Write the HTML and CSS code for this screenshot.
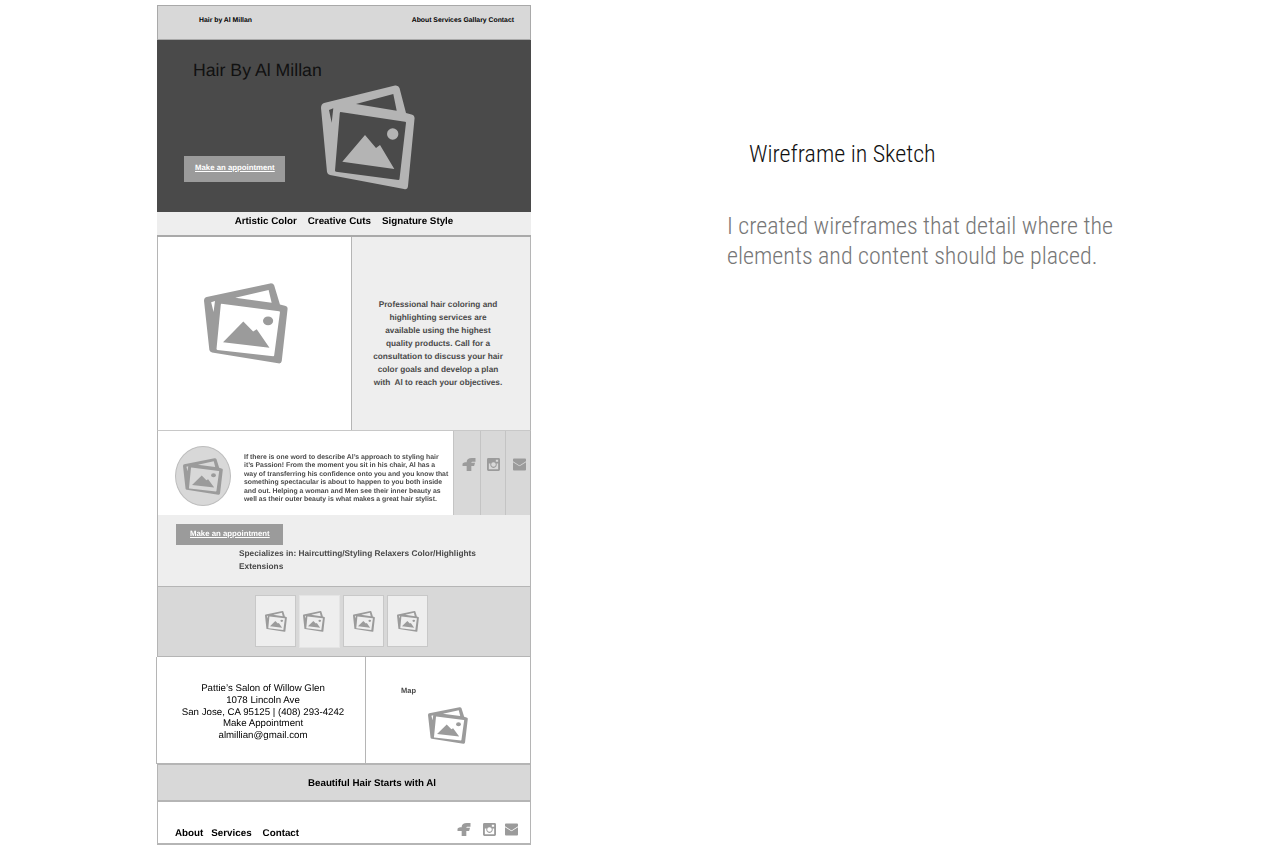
FILE: index.html
```html
<!DOCTYPE html>
<html lang="en">
<head>
<meta charset="utf-8">
<title>Wireframe in Sketch</title>
<link rel="stylesheet" href="styles.css">
</head>
<body>
<svg class="defs" width="0" height="0" aria-hidden="true">
  <symbol id="photos" viewBox="0 0 94 105" preserveAspectRatio="none">
    <path fill-rule="evenodd" d="M3 18 74 .5Q77.500 0 78.500 3L85 28 90.500 29.500Q94 30.500 93.500 34L87 101Q86.500 105 83 104L9 90Q6.500 89.500 6 87L0 23Q0 19 3 18ZM19.500 27Q19 27 18.800 28L14 85.500Q14 86.500 15 86.700L77.500 95Q78.300 95 78.500 94L85 37.800Q85 36.800 84 36.700ZM35 19 75.700 25.700 72.300 9ZM8 25 10.700 37.700 12.300 23.300Z"/>
    <path d="M21.300 76.700 44 50 55 63 59 60 73.300 84Z"/>
    <circle cx="71.700" cy="49" r="5.700"/>
  </symbol>
  <symbol id="fb" viewBox="0 0 14 14">
    <path d="M4.500 14V8.500H0V6.500C0 5 2 4.500 4.500 4.500V4C4.500 1.500 6.500 0 10 0H14V4H11C10 4 9.500 4.500 9.500 5H13.500L12.500 8.500H9.500V14Z"/>
  </symbol>
  <symbol id="ig" viewBox="0 0 14 14">
    <path fill-rule="evenodd" d="M1.500 0H12.500A1.500 1.500 0 0 1 14 1.500V12.500A1.500 1.500 0 0 1 12.500 14H1.500A1.500 1.500 0 0 1 0 12.500V1.500A1.500 1.500 0 0 1 1.500 0ZM2 6V12H12V6H10.300A3.500 3.500 0 1 1 3.700 6ZM7 4.500A2.500 2.500 0 1 0 7 9.500 2.500 2.500 0 0 0 7 4.500ZM9.500 2V4H12V2Z"/>
  </symbol>
  <symbol id="mail" viewBox="0 0 14 13">
    <path d="M1 0H13A1 1 0 0 1 14 1V3L7 7.500 0 3V1A1 1 0 0 1 1 0ZM0 4 7 8.500 14 4V12A1 1 0 0 1 13 13H1A1 1 0 0 1 0 12Z"/>
  </symbol>
</svg>

<main class="page">
  <div class="wire">
    <header class="nav">
      <span class="nav-brand">Hair by Al Millan</span>
      <span class="nav-links">About Services Gallary Contact</span>
    </header>

    <section class="hero">
      <div class="hero-copy">
        <h1 class="hero-title">Hair By Al Millan</h1>
        <a class="btn btn-hero" href="#">Make an appointment</a>
      </div>
      <svg class="ico ico-hero"><use href="#photos"/></svg>
    </section>

    <div class="tagline">
      <span>Artistic Color</span><span>Creative Cuts</span><span>Signature Style</span>
    </div>

    <section class="feature">
      <div class="feature-img"><svg class="ico ico-feature"><use href="#photos"/></svg></div>
      <p class="feature-text">Professional hair coloring and<br>highlighting services are<br>available using the highest<br>quality products. Call for a<br>consultation to discuss your hair<br>color goals and develop a plan<br>with&nbsp; Al to reach your objectives.</p>
    </section>

    <section class="bio">
      <div class="bio-main">
        <div class="avatar"><svg class="ico ico-avatar"><use href="#photos"/></svg></div>
        <p class="bio-text">If there is one word to describe Al’s approach to styling hair<br>it’s Passion! From the moment you sit in his chair, Al has a<br>way of transferring his confidence onto you and you know that<br>something spectacular is about to happen to you both inside<br>and out. Helping a woman and Men see their inner beauty as<br>well as their outer beauty is what makes a great hair stylist.</p>
      </div>
      <div class="social-cell cell-fb"><svg class="soc soc-fb"><use href="#fb"/></svg></div>
      <div class="social-cell cell-ig"><svg class="soc soc-ig"><use href="#ig"/></svg></div>
      <div class="social-cell cell-mail"><svg class="soc soc-mail"><use href="#mail"/></svg></div>
    </section>

    <section class="cta">
      <a class="btn btn-cta" href="#">Make an appointment</a>
      <p class="special">Specializes in: Haircutting/Styling Relaxers Color/Highlights<br>Extensions</p>
    </section>

    <section class="gallery">
      <div class="thumb"><svg class="ico ico-thumb"><use href="#photos"/></svg></div>
      <div class="thumb thumb-alt"><svg class="ico ico-thumb"><use href="#photos"/></svg></div>
      <div class="thumb"><svg class="ico ico-thumb"><use href="#photos"/></svg></div>
      <div class="thumb"><svg class="ico ico-thumb"><use href="#photos"/></svg></div>
    </section>

    <section class="contact">
      <address class="address">Pattie’s Salon of Willow Glen<br>1078 Lincoln Ave<br>San Jose, CA 95125 | (408) 293-4242<br>Make Appointment<br>almillian@gmail.com</address>
      <div class="map">
        <span class="map-label">Map</span>
        <svg class="ico ico-map"><use href="#photos"/></svg>
      </div>
    </section>

    <div class="band">Beautiful Hair Starts with Al</div>

    <footer class="footer">
      <nav class="foot-links"><span>About</span><span>Services</span><span>Contact</span></nav>
      <div class="foot-icons">
        <svg class="soc soc-fb"><use href="#fb"/></svg>
        <svg class="soc soc-ig"><use href="#ig"/></svg>
        <svg class="soc soc-mail"><use href="#mail"/></svg>
      </div>
    </footer>
  </div>

  <aside class="note">
    <h2 class="note-title">Wireframe in Sketch</h2>
    <p class="note-text">I created wireframes that detail where the elements and content should be placed.</p>
  </aside>
</main>
</body>
</html>
```

FILE: styles.css
```css
* { box-sizing: border-box; }

html, body { margin: 0; padding: 0; background: #fff; }

body { height: 850px; overflow: hidden; }

.defs { display: block; height: 0; }

.page {
  display: flex;
  align-items: flex-start;
  padding: 5px 0 0 156px;
}

.wire {
  width: 376px;
  flex: none;
  font-family: "Liberation Sans", Arial, sans-serif;
  text-rendering: geometricPrecision;
  filter: blur(0.35px);
}

.ico { display: block; flex: none; fill: #9b9b9b; }

/* nav */
.nav {
  height: 35px;
  margin-left: 1px;
  margin-right: 1px;
  padding: 10px 16px 0 41px;
  display: flex;
  justify-content: space-between;
  background: #d8d8d8;
  border: 1px solid #a9a9a9;
  font-size: 6.850px;
  line-height: 9px;
  font-weight: 700;
  color: #000;
}

/* hero */
.hero {
  height: 172px;
  margin: 0 1px;
  padding: 0 0 30px 27px;
  display: flex;
  background: #4a4a4a;
}

.hero-copy {
  width: 137px;
  flex: none;
  display: flex;
  flex-direction: column;
  justify-content: space-between;
  align-items: flex-start;
}

.hero-title {
  margin: 19px 0 0 9px;
  font-size: 17.700px;
  line-height: 22px;
  font-weight: 400;
  color: #111;
  white-space: nowrap;
}

.btn {
  display: block;
  background: #9b9b9b;
  color: #fff;
  font-weight: 700;
  text-decoration: underline;
  white-space: nowrap;
}

.btn-hero {
  width: 101px;
  height: 26px;
  padding-left: 11px;
  font-size: 7.800px;
  line-height: 24px;
}

.ico-hero {
  width: 94px;
  height: 105px;
  margin-top: 45px;
  fill: #b4b4b4;
}

/* tagline */
.tagline {
  height: 25px;
  margin: 0 1px;
  display: flex;
  justify-content: center;
  gap: 11px;
  background: #eee;
  border-bottom: 2px solid #a9a9a9;
  font-size: 9.800px;
  line-height: 19px;
  font-weight: 700;
  color: #000;
}

/* feature */
.feature {
  height: 194px;
  margin: 0 1px;
  display: flex;
  border-left: 1px solid #b5b5b5;
  border-right: 1px solid #b5b5b5;
  border-bottom: 1px solid #c8c8c8;
}

.feature-img {
  width: 194px;
  flex: none;
  padding: 46px 0 0 46px;
  background: #fff;
  border-right: 1px solid #b5b5b5;
}

.ico-feature { width: 84px; height: 81px; }

.feature-text {
  flex: 1;
  margin: 0;
  padding: 61px 6px 0 0;
  background: #eee;
  text-align: center;
  font-size: 8.250px;
  line-height: 13.050px;
  font-weight: 700;
  color: #4a4a4a;
}

/* bio */
.bio {
  height: 84px;
  margin: 0 1px;
  display: flex;
  background: #d8d8d8;
  border-left: 1px solid #b5b5b5;
  border-right: 1px solid #b5b5b5;
}

.bio-main {
  width: 295px;
  flex: none;
  display: flex;
  padding: 15px 0 0 17px;
  background: #fff;
}

.avatar {
  width: 56px;
  height: 60px;
  flex: none;
  display: flex;
  align-items: center;
  justify-content: center;
  background: #d8d8d8;
  border: 1px solid #bdbdbd;
  border-radius: 50%;
}

.ico-avatar { width: 40px; height: 37px; }

.bio-text {
  margin: 8px 0 0 13px;
  font-size: 6.850px;
  line-height: 8.400px;
  font-weight: 700;
  color: #4a4a4a;
  white-space: nowrap;
}

.social-cell {
  display: flex;
  justify-content: center;
  padding-top: 27px;
  border-left: 1px solid #c4c4c4;
}

.cell-fb { width: 27px; padding-left: 3px; }
.cell-ig { width: 25px; }
.cell-mail { flex: 1; padding-left: 2px; }

.soc { display: block; fill: #9b9b9b; flex: none; }
.soc-fb { width: 14px; height: 13px; }
.soc-ig { width: 13px; height: 13px; }
.soc-mail { width: 13px; height: 13px; }

/* cta */
.cta {
  height: 72px;
  margin: 0 1px;
  padding: 9px 0 0 18px;
  background: #eee;
  border-left: 1px solid #b5b5b5;
  border-right: 1px solid #b5b5b5;
  border-bottom: 1px solid #b5b5b5;
}

.btn-cta {
  width: 107px;
  height: 21px;
  padding-left: 14px;
  font-size: 7.800px;
  line-height: 20px;
}

.special {
  margin: 2px 0 0 63px;
  font-size: 8.300px;
  line-height: 13.100px;
  font-weight: 700;
  color: #4a4a4a;
  white-space: nowrap;
}

/* gallery */
.gallery {
  height: 70px;
  margin: 0 1px;
  padding: 8px 0 0 97px;
  display: flex;
  align-items: flex-start;
  gap: 3px;
  background: #d8d8d8;
  border-left: 1px solid #b5b5b5;
  border-right: 1px solid #b5b5b5;
  border-bottom: 1px solid #b5b5b5;
}

.thumb {
  width: 41px;
  height: 52px;
  flex: none;
  padding: 15px 0 0 9px;
  background: #eee;
  border: 1px solid #c8c8c8;
}

.thumb-alt { height: 53px; border-color: #e4e4e4; padding-left: 3px; }

.ico-thumb { width: 22px; height: 21px; }

/* contact */
.contact {
  height: 107px;
  display: flex;
  background: #fff;
  border-left: 1px solid #b5b5b5;
  border-right: 1px solid #b5b5b5;
  margin-right: 1px;
  border-bottom: 1px solid #b5b5b5;
}

.address {
  width: 209px;
  flex: none;
  padding: 26px 0 0 4px;
  border-right: 1px solid #b5b5b5;
  text-align: center;
  font-style: normal;
  font-size: 9.700px;
  line-height: 11.800px;
  color: #000;
  white-space: nowrap;
}

.map { flex: 1; padding: 29px 0 0 35px; }

.map-label {
  display: block;
  font-size: 7.500px;
  line-height: 9px;
  font-weight: 700;
  color: #4a4a4a;
}

.ico-map { width: 40px; height: 37px; margin: 12px 0 0 27px; }

/* band */
.band {
  height: 38px;
  margin: 0 1px;
  padding: 13px 0 0 150px;
  background: #d8d8d8;
  border: 1px solid #b5b5b5;
  border-bottom-width: 2px;
  font-size: 9.750px;
  line-height: 11px;
  font-weight: 700;
  color: #000;
}

/* footer */
.footer {
  height: 43px;
  margin: 0 1px;
  padding: 21px 12px 0 17px;
  display: flex;
  justify-content: space-between;
  background: #fff;
  border-left: 1px solid #b5b5b5;
  border-right: 1px solid #b5b5b5;
  border-bottom: 2px solid #b5b5b5;
}

.foot-links {
  display: flex;
  gap: 8px;
  margin-top: 5px;
  font-size: 9.800px;
  line-height: 12px;
  font-weight: 700;
  color: #000;
}

.foot-links span + span + span { margin-left: 3px; }

.foot-icons { display: flex; align-items: flex-start; }

.foot-icons .soc-ig { margin: 0 9px 0 12px; }

/* side note */
.note {
  width: 400px;
  margin: 136px 0 0 195px;
  flex: none;
  font-family: Roboto, "Liberation Sans", sans-serif;
  font-weight: 300;
  font-stretch: 80%;
}

.note-title {
  margin: 0 0 0 22px;
  font-size: 24px;
  line-height: 26px;
  font-weight: 300;
  color: #111;
}

.note-text {
  margin: 44px 0 0;
  font-size: 24px;
  line-height: 30px;
  color: #777;
}
```
